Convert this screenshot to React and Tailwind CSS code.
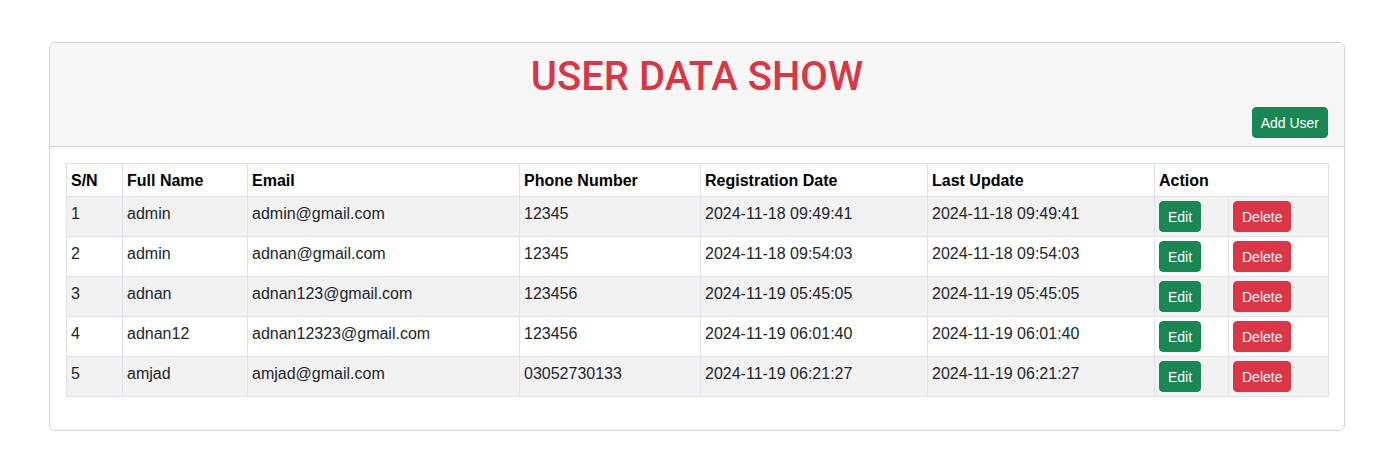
import React from 'react';

const users = [
    { id: 1, name: 'admin', email: 'admin@gmail.com', phone: '12345', created: '2024-11-18 09:49:41', updated: '2024-11-18 09:49:41' },
    { id: 2, name: 'admin', email: 'adnan@gmail.com', phone: '12345', created: '2024-11-18 09:54:03', updated: '2024-11-18 09:54:03' },
    { id: 3, name: 'adnan', email: 'adnan123@gmail.com', phone: '123456', created: '2024-11-19 05:45:05', updated: '2024-11-19 05:45:05' },
    { id: 4, name: 'adnan12', email: 'adnan12323@gmail.com', phone: '123456', created: '2024-11-19 06:01:40', updated: '2024-11-19 06:01:40' },
    { id: 5, name: 'amjad', email: 'amjad@gmail.com', phone: '03052730133', created: '2024-11-19 06:21:27', updated: '2024-11-19 06:21:27' }
];

const td = 'border border-[#dee2e6] px-[4px] pt-[5px] pb-[3px] align-top';

export default function App() {
    return (
        <div className="bg-white min-h-[461px] pt-[42px] font-['Liberation_Sans',Arial,sans-serif] text-[16px] leading-[24px] text-[#212529]">
            <div className="ml-[49px] w-[1296px] border border-[#d3d3d3] rounded-[6px] overflow-hidden">
                {/* Header */}
                <div className="bg-[#f7f7f7] border-b border-[#d3d3d3] px-[16px] py-[8px]">
                    <h1 className="text-center text-[#dc3545] font-['Roboto',sans-serif] text-[40px] leading-[48px] font-medium pt-[2px] mb-[6px]">
                        USER DATA SHOW
                    </h1>
                    <div className="flex justify-end">
                        <button className="bg-[#198754] text-white text-[14px] leading-[21px] px-[8px] pt-[5px] pb-[3px] rounded-[4px] border border-[#198754]">
                            Add User
                        </button>
                    </div>
                </div>

                {/* Table */}
                <div className="px-[16px] pt-[16px] pb-[33px]">
                    <table className="w-[1262px] table-fixed border-collapse">
                        <colgroup>
                            <col className="w-[56px]" />
                            <col className="w-[125px]" />
                            <col className="w-[272px]" />
                            <col className="w-[181px]" />
                            <col className="w-[227px]" />
                            <col className="w-[227px]" />
                            <col className="w-[74px]" />
                            <col className="w-[100px]" />
                        </colgroup>
                        <thead>
                            <tr className="text-left text-black">
                                <th className={td}>S/N</th>
                                <th className={td}>Full Name</th>
                                <th className={td}>Email</th>
                                <th className={td}>Phone Number</th>
                                <th className={td}>Registration Date</th>
                                <th className={td}>Last Update</th>
                                <th className={td} colSpan={2}>Action</th>
                            </tr>
                        </thead>
                        <tbody>
                            {users.map((u, i) => (
                                <tr key={u.id} className={i % 2 === 0 ? 'bg-[#f2f2f2]' : 'bg-white'}>
                                    <td className={td}>{u.id}</td>
                                    <td className={td}>{u.name}</td>
                                    <td className={td}>{u.email}</td>
                                    <td className={td}>{u.phone}</td>
                                    <td className={td}>{u.created}</td>
                                    <td className={td}>{u.updated}</td>
                                    <td className="border border-[#dee2e6] p-[4px] align-top">
                                        <button className="bg-[#198754] text-white text-[14px] leading-[21px] px-[8px] pt-[5px] pb-[3px] rounded-[4px] border border-[#198754]">
                                            Edit
                                        </button>
                                    </td>
                                    <td className="border border-[#dee2e6] p-[4px] align-top">
                                        <button className="bg-[#dc3545] text-white text-[14px] leading-[21px] px-[8px] pt-[5px] pb-[3px] rounded-[4px] border border-[#dc3545]">
                                            Delete
                                        </button>
                                    </td>
                                </tr>
                            ))}
                        </tbody>
                    </table>
                </div>
            </div>
        </div>
    );
}
